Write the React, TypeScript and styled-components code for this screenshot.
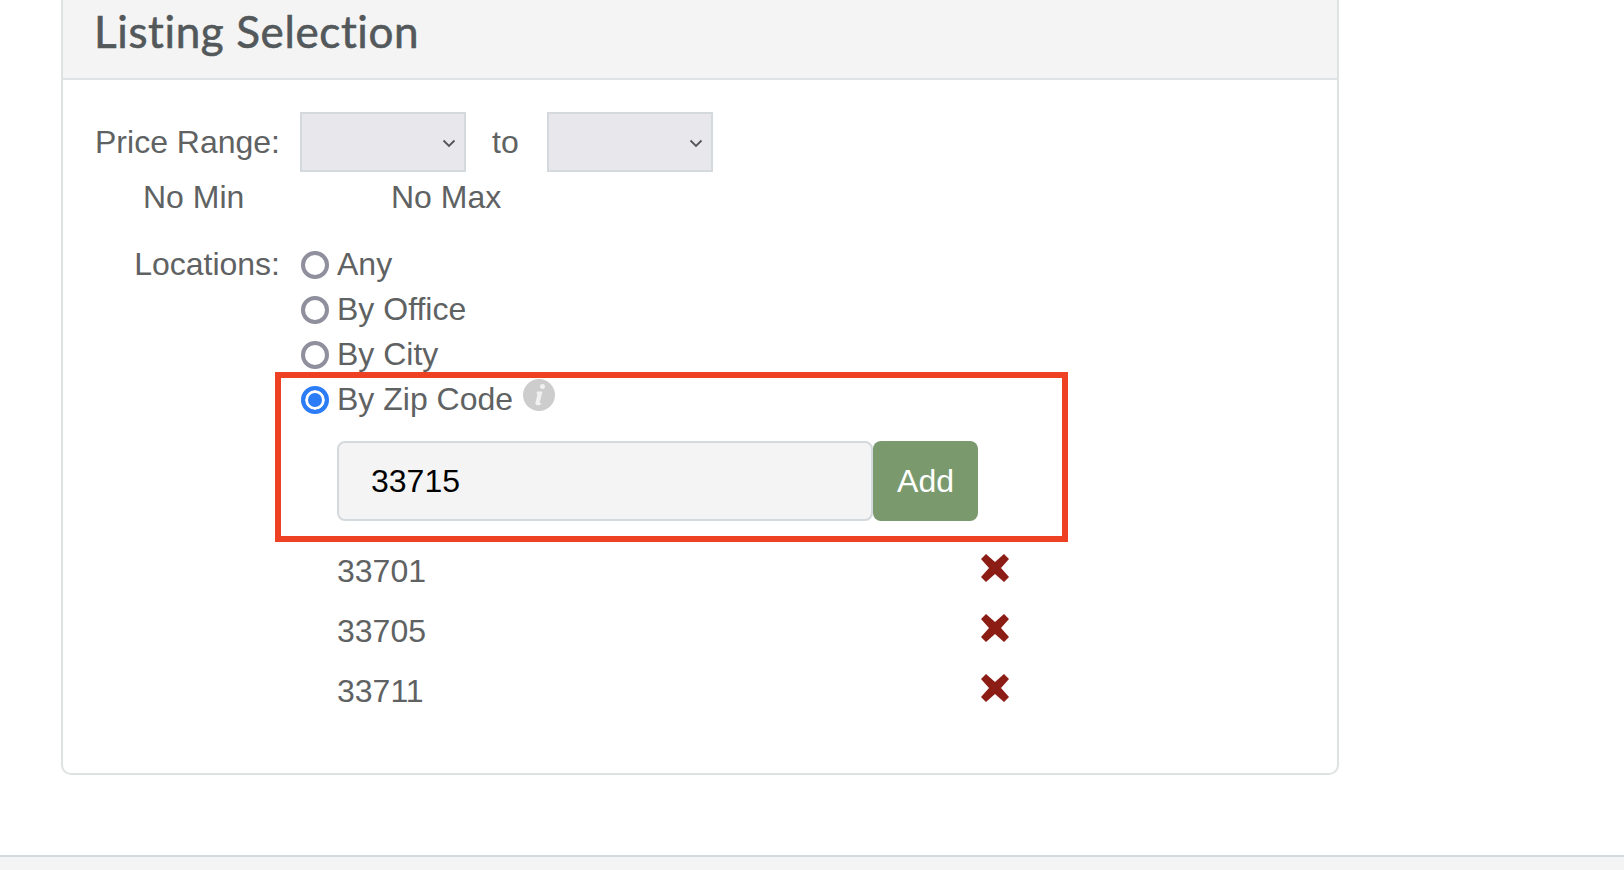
import { createGlobalStyle, styled } from "styled-components";

const GlobalStyle = createGlobalStyle`
  html, body {
    margin: 0;
    padding: 0;
    background: #fff;
    font-family: "Liberation Sans", Arial, sans-serif;
    overflow: hidden;
  }
`;

const Page = styled.div`
  height: 870px;
  display: flex;
  flex-direction: column;
`;

const Panel = styled.section`
  position: relative;
  box-sizing: border-box;
  width: 1278px;
  height: 775px;
  margin-left: 61px;
  border: 2px solid #dfe2e3;
  border-top: none;
  border-radius: 0 0 10px 10px;
`;

const PanelHeader = styled.header`
  box-sizing: border-box;
  height: 80px;
  padding-left: 31px;
  background: #f4f4f4;
  border-bottom: 2px solid #dfe3e5;
`;

const PanelTitle = styled.h2`
  margin: 0;
  font-family: "Lato", sans-serif;
  font-size: 44px;
  font-weight: 400;
  font-variant-ligatures: none;
  letter-spacing: 0.62px;
  line-height: 62px;
  color: #53585b;
  -webkit-text-stroke: 0.6px #53585b;
`;

const PanelBody = styled.div`
  padding: 32px 0 0 32px;
  font-size: 32px;
  color: #5f6263;
`;

const FieldRow = styled.div`
  display: grid;
  grid-template-columns: 185px 1fr;
  column-gap: 20px;
`;

const FieldLabel = styled.div<{ $rowHeight: number }>`
  text-align: right;
  line-height: ${(props) => props.$rowHeight}px;
`;

const PriceControls = styled.div`
  display: flex;
  align-items: center;
`;

const SelectBox = styled.div`
  box-sizing: border-box;
  width: 166px;
  height: 60px;
  padding: 2px 8px 0 0;
  display: flex;
  align-items: center;
  justify-content: flex-end;
  background: #e8e8ec;
  border: 2px solid #d3d9dc;
`;

const RangeWord = styled.span`
  margin: 0 28px 0 26px;
`;

const PriceHints = styled.div`
  display: flex;
  height: 45px;
  margin: 3px 0 22px;
  line-height: 45px;
`;

const PriceHint = styled.span<{ $width: number; $indent: number }>`
  width: ${(props) => props.$width}px;
  padding-left: ${(props) => props.$indent}px;
`;

const RadioList = styled.div`
  display: flex;
  flex-direction: column;
`;

const RadioRow = styled.div`
  display: flex;
  align-items: center;
  height: 45px;
`;

const RadioMark = styled.span<{ $checked?: boolean }>`
  box-sizing: border-box;
  flex: none;
  width: 28px;
  height: 28px;
  margin: 0 8px 0 1px;
  border-radius: 50%;
  border: 4px solid ${(props) => (props.$checked ? "#2b7cf6" : "#8f8f9d")};
  background: ${(props) => (props.$checked ? "#2b7cf6" : "#fff")};
  box-shadow: ${(props) => (props.$checked ? "inset 0 0 0 3px #fff" : "none")};
`;

const InfoIcon = styled.svg`
  width: 32px;
  height: 32px;
  margin: -9px 0 0 10px;
  filter: blur(0.5px);
`;

const ZipForm = styled.div`
  display: flex;
  height: 80px;
  margin: 19px 0 20px 37px;
`;

const ZipInput = styled.input`
  box-sizing: border-box;
  width: 536px;
  height: 80px;
  padding: 0 32px;
  border: 2px solid #d3d9dc;
  border-radius: 8px;
  background: #f4f4f4;
  color: #000;
  font: 32px "Liberation Sans", Arial, sans-serif;
  outline: none;
`;

const AddButton = styled.button`
  width: 105px;
  height: 80px;
  padding: 0;
  border: none;
  border-radius: 8px;
  background: #7a9a6e;
  color: #fff;
  font: 32px "Liberation Sans", Arial, sans-serif;
`;

const ZipList = styled.ul`
  list-style-type: none;
  margin: 0 0 0 37px;
  padding: 0;
`;

const ZipItem = styled.li`
  display: flex;
  align-items: center;
  height: 60px;
`;

const ZipCode = styled.span`
  width: 644px;
`;

const RemoveIcon = styled.svg`
  width: 28px;
  height: 28px;
  margin-top: -7px;
  filter: blur(0.5px);
`;

const Callout = styled.div`
  position: absolute;
  left: 212px;
  top: 372px;
  box-sizing: border-box;
  width: 793px;
  height: 170px;
  border: 6px solid #ee4124;
  pointer-events: none;
`;

const Footer = styled.footer`
  margin-top: auto;
  height: 13px;
  background: #f4f4f4;
  border-top: 2px solid #d3d9dc;
`;

const Chevron = () => (
  <svg width="14" height="9" viewBox="0 0 14 9" fill="none">
    <path d="M1.500 1.500 7 7l5.500-5.500" stroke="#555" strokeWidth="1.8" />
  </svg>
);

const ZIP_CODES = ["33701", "33705", "33711"];

const App = () => {
  return (
    <Page>
      <GlobalStyle />
      <Panel>
        <PanelHeader>
          <PanelTitle>Listing Selection</PanelTitle>
        </PanelHeader>
        <PanelBody>
          <FieldRow>
            <FieldLabel $rowHeight={60}>Price Range:</FieldLabel>
            <PriceControls>
              <SelectBox>
                <Chevron />
              </SelectBox>
              <RangeWord>to</RangeWord>
              <SelectBox>
                <Chevron />
              </SelectBox>
            </PriceControls>
          </FieldRow>
          <PriceHints>
            <PriceHint $width={248} $indent={48}>No Min</PriceHint>
            <PriceHint $width={200} $indent={0}>No Max</PriceHint>
          </PriceHints>
          <FieldRow>
            <FieldLabel $rowHeight={45}>Locations:</FieldLabel>
            <RadioList>
              <RadioRow>
                <RadioMark />
                Any
              </RadioRow>
              <RadioRow>
                <RadioMark />
                By Office
              </RadioRow>
              <RadioRow>
                <RadioMark />
                By City
              </RadioRow>
              <RadioRow>
                <RadioMark $checked />
                By Zip Code
                <InfoIcon viewBox="0 0 32 32">
                  <circle cx="16" cy="16" r="16" fill="#cdcdcd" />
                  <path
                    d="M19.500 5a2.500 2.500 0 1 1 0 5 2.500 2.500 0 0 1 0-5ZM14.500 12.500h5l-2.800 11c-.2.800.4 1 1.500.4l.3 1c-1.800 1.500-6.300 2.400-6.100-.8l2-8.600c.2-1-.3-1.100-1.300-1.100Z"
                    fill="#f1f1f1"
                  />
                </InfoIcon>
              </RadioRow>
              <ZipForm>
                <ZipInput defaultValue="33715" />
                <AddButton>Add</AddButton>
              </ZipForm>
              <ZipList>
                {ZIP_CODES.map((zip) => (
                  <ZipItem key={zip}>
                    <ZipCode>{zip}</ZipCode>
                    <RemoveIcon viewBox="0 0 28 28">
                      <path
                        d="M5 0 14 8 23 0 28 5 20 14 28 23 23 28 14 20 5 28 0 23 8 14 0 5Z"
                        fill="#8b1d15"
                      />
                    </RemoveIcon>
                  </ZipItem>
                ))}
              </ZipList>
            </RadioList>
          </FieldRow>
        </PanelBody>
        <Callout />
      </Panel>
      <Footer />
    </Page>
  );
};

export default App;
